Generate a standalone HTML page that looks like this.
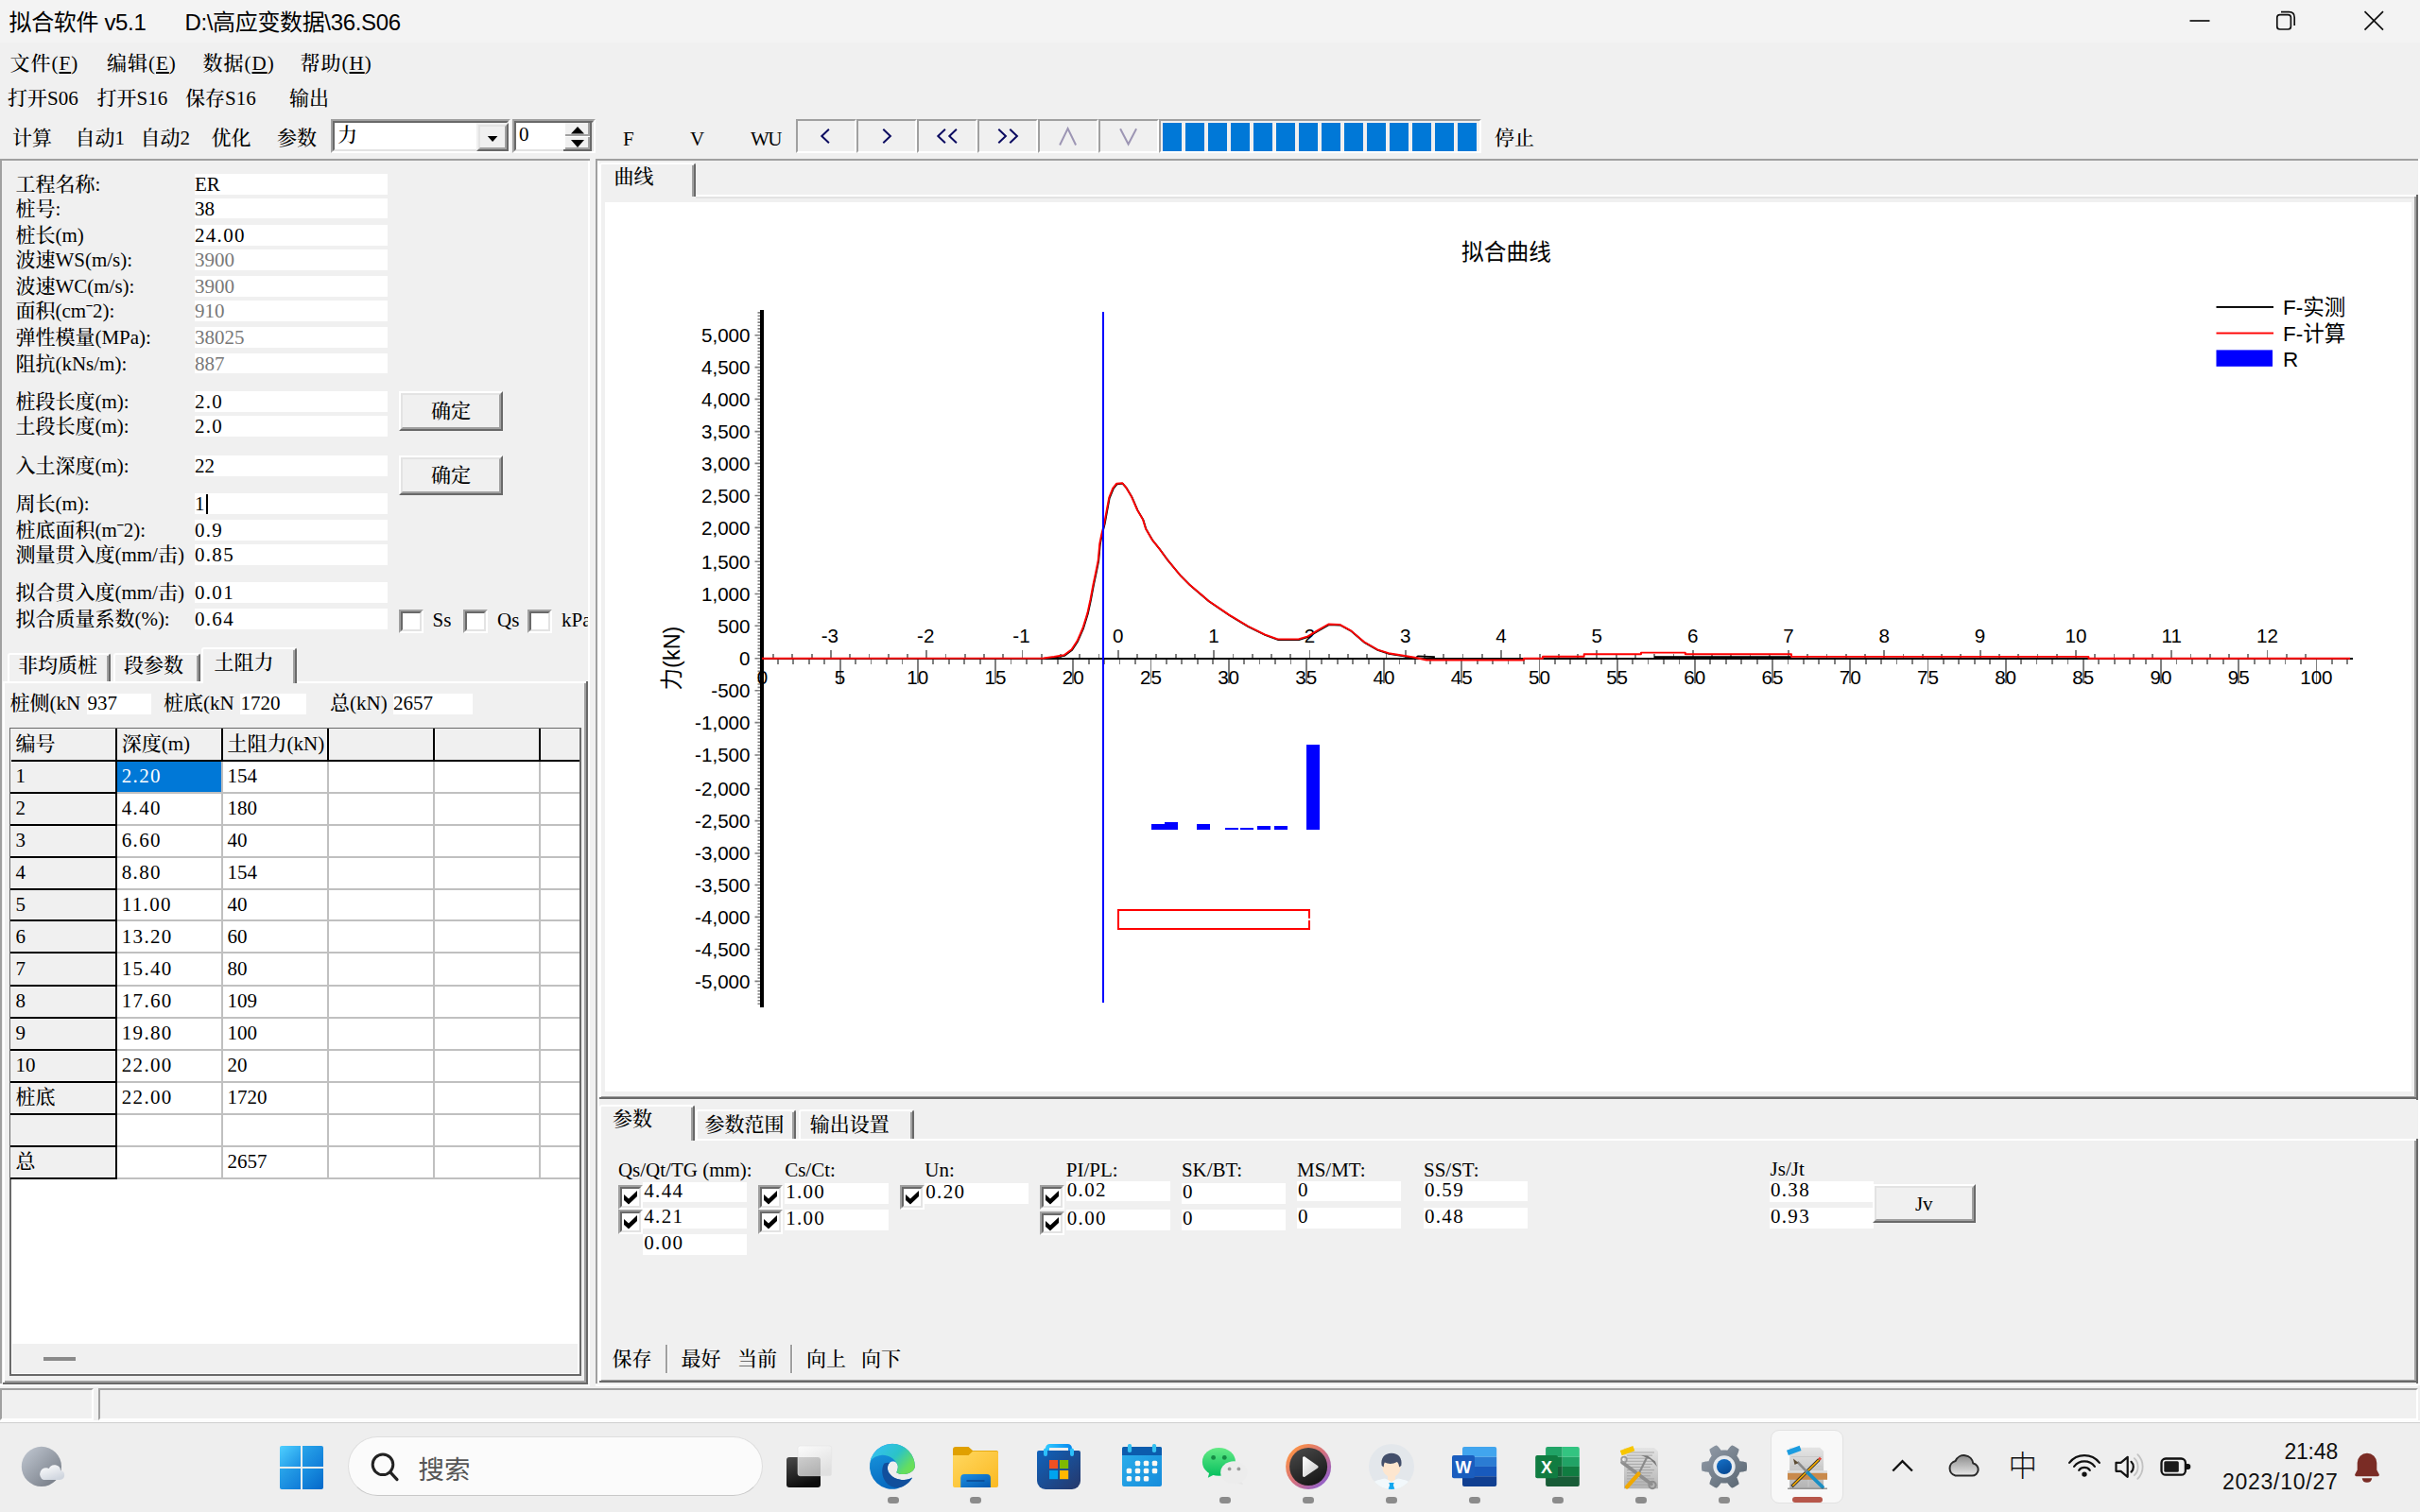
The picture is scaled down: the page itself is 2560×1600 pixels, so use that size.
<!DOCTYPE html><html lang="zh-CN"><head><meta charset="utf-8"><title>拟合软件 v5.1</title><style>
*{box-sizing:border-box;margin:0;padding:0}
html,body{width:2560px;height:1600px;overflow:hidden;background:#f0f0f0}
body{position:relative;font-family:"Liberation Serif","Noto Serif CJK SC",serif;font-size:21px;color:#000;-webkit-font-smoothing:antialiased}
.a{position:absolute}
.t{position:absolute;white-space:nowrap;line-height:22px;height:22px;font-size:21px;font-weight:500;letter-spacing:0}
.ui{font-family:"Liberation Sans","Noto Sans CJK SC",sans-serif;font-weight:400}
.w{position:absolute;background:#fff}
.sunk{position:absolute;border-style:solid;border-width:2px;border-color:#a0a0a0 #fff #fff #a0a0a0}
.sunk>i{position:absolute;left:0;top:0;right:0;bottom:0;border-style:solid;border-width:2px;border-color:#696969 #e3e3e3 #e3e3e3 #696969}
.btn{position:absolute;background:#f0f0f0;border-style:solid;border-width:2px;border-color:#fff #696969 #696969 #fff}
.btn>i{position:absolute;left:0;top:0;right:0;bottom:0;border-style:solid;border-width:2px;border-color:#e3e3e3 #a0a0a0 #a0a0a0 #e3e3e3}
.btn>span{position:absolute;left:0;right:0;text-align:center;white-space:nowrap;line-height:22px;font-weight:500}
.g{color:#787878}
u{text-decoration:underline;text-underline-offset:2px}
</style></head><body>
<div class="a" style="left:0px;top:0px;width:2560px;height:45px;background:#f3f3f3;"></div>
<div class="t ui" style="left:9.5px;top:8.5px;font-size:24px;line-height:30px;height:30px;letter-spacing:-0.35px">拟合软件 v5.1</div>
<div class="t ui" style="left:195.5px;top:8.5px;font-size:24px;line-height:30px;height:30px;letter-spacing:-0.35px">D:\高应变数据\36.S06</div>
<svg class="a" style="left:2300px;top:0" width="260" height="45" viewBox="2300 0 260 45" fill="none" stroke="#111" stroke-width="1.7">
<path d="M2316.5 22H2337.5"/>
<rect x="2408.8" y="15.6" width="14.6" height="15.4" rx="3"/>
<path d="M2413 12.6H2421.5Q2427.2 12.6 2427.2 18.4V27"/>
<path d="M2501.5 12.2L2521 31.6M2521 12.2L2501.5 31.6"/>
</svg>
<div class="t " style="left:10.5px;top:55.5px;letter-spacing:1px">文件(<u>F</u>)</div>
<div class="t " style="left:113px;top:55.5px;letter-spacing:1px">编辑(<u>E</u>)</div>
<div class="t " style="left:214.5px;top:55.5px;letter-spacing:1px">数据(<u>D</u>)</div>
<div class="t " style="left:317.5px;top:55.5px;letter-spacing:1px">帮助(<u>H</u>)</div>
<div class="t " style="left:8px;top:92.5px;">打开S06</div>
<div class="t " style="left:102.5px;top:92.5px;">打开S16</div>
<div class="t " style="left:196px;top:92.5px;">保存S16</div>
<div class="t " style="left:306px;top:92.5px;">输出</div>
<div class="t " style="left:13px;top:135px;">计算</div>
<div class="t " style="left:79.5px;top:135px;">自动1</div>
<div class="t " style="left:148.5px;top:135px;">自动2</div>
<div class="t " style="left:223.5px;top:135px;">优化</div>
<div class="t " style="left:293px;top:135px;">参数</div>
<div class="sunk" style="left:350px;top:126.2px;width:189.5px;height:36px;background:#fff"><i></i></div>
<div class="t " style="left:357px;top:131.5px;">力</div>
<div class="btn" style="left:504.2px;top:130.3px;width:33.4px;height:29.4px;border-width:2px;border-color:#f0f0f0 #696969 #696969 #f0f0f0"><i style="border-width:2px"></i></div>
<svg class="a" style="left:504px;top:130px" width="34" height="30" viewBox="0 0 34 30"><path d="M11.8 14H22.4L17.1 20Z" fill="#000"/></svg>
<div class="sunk" style="left:542.3px;top:126.4px;width:87.7px;height:35.6px;background:#fff"><i></i></div>
<div class="t " style="left:549px;top:130.5px;">0</div>
<div class="a" style="left:598px;top:130px;width:26px;height:13.5px;background:#f0f0f0;border-right:2px solid #a0a0a0;border-bottom:2px solid #a0a0a0"></div>
<div class="a" style="left:598px;top:144.5px;width:26px;height:13.5px;background:#f0f0f0;border-right:2px solid #a0a0a0;border-bottom:2px solid #a0a0a0"></div>
<div class="a" style="left:624px;top:130px;width:2px;height:29.5px;background:#696969"></div><div class="a" style="left:596px;top:157.8px;width:30px;height:1.8px;background:#696969"></div>
<svg class="a" style="left:598px;top:130px" width="26" height="28" viewBox="0 0 26 28"><path d="M6 11.5H20L13 4Z M6 18H20L13 26Z" fill="#000"/></svg>
<div class="t " style="left:659px;top:136px;">F</div>
<div class="t " style="left:730px;top:136px;">V</div>
<div class="t " style="left:794px;top:136px;letter-spacing:-1.5px">WU</div>
<div class="a" style="left:842.1px;top:126.4px;width:64.2px;height:35.6px;border-left:2px solid #a0a0a0;border-top:2px solid #a0a0a0;border-bottom:2.5px solid #fff;border-right:2px solid #fff"></div>
<div class="a" style="left:906.1px;top:126.4px;width:64.2px;height:35.6px;border-left:2px solid #a0a0a0;border-top:2px solid #a0a0a0;border-bottom:2.5px solid #fff;border-right:2px solid #fff"></div>
<div class="a" style="left:970.1px;top:126.4px;width:64.2px;height:35.6px;border-left:2px solid #a0a0a0;border-top:2px solid #a0a0a0;border-bottom:2.5px solid #fff;border-right:2px solid #fff"></div>
<div class="a" style="left:1034.1px;top:126.4px;width:64.2px;height:35.6px;border-left:2px solid #a0a0a0;border-top:2px solid #a0a0a0;border-bottom:2.5px solid #fff;border-right:2px solid #fff"></div>
<div class="a" style="left:1098.1px;top:126.4px;width:64.2px;height:35.6px;border-left:2px solid #a0a0a0;border-top:2px solid #a0a0a0;border-bottom:2.5px solid #fff;border-right:2px solid #fff"></div>
<div class="a" style="left:1162.1px;top:126.4px;width:64.2px;height:35.6px;border-left:2px solid #a0a0a0;border-top:2px solid #a0a0a0;border-bottom:2.5px solid #fff;border-right:2px solid #fff"></div>
<svg class="a" style="left:0;top:120px" width="1240" height="50" viewBox="0 120 1240 50"><path d="M876.9 136.8L869.3 144L876.9 151.2" fill="none" stroke="#0a0a60" stroke-width="2"/></svg>
<svg class="a" style="left:0;top:120px" width="1240" height="50" viewBox="0 120 1240 50"><path d="M934.3 136.8L941.9 144L934.3 151.2" fill="none" stroke="#0a0a60" stroke-width="2"/></svg>
<svg class="a" style="left:0;top:120px" width="1240" height="50" viewBox="0 120 1240 50"><path d="M999.9 136.8L992.3 144L999.9 151.2M1011.9 136.8L1004.3 144L1011.9 151.2" fill="none" stroke="#0a0a60" stroke-width="2"/></svg>
<svg class="a" style="left:0;top:120px" width="1240" height="50" viewBox="0 120 1240 50"><path d="M1056.3 136.8L1063.9 144L1056.3 151.2M1068.3 136.8L1075.9 144L1068.3 151.2" fill="none" stroke="#0a0a60" stroke-width="2"/></svg>
<svg class="a" style="left:0;top:120px" width="1240" height="50" viewBox="0 120 1240 50"><path d="M1121.1 153.5L1129.6 136L1138.1 153.5" fill="none" stroke="#9d96b4" stroke-width="2"/></svg>
<svg class="a" style="left:0;top:120px" width="1240" height="50" viewBox="0 120 1240 50"><path d="M1185.1 136.3L1193.6 152.5L1202.1 136.3" fill="none" stroke="#9d96b4" stroke-width="2"/></svg>
<div class="a" style="left:1225.7px;top:126.4px;width:341.5px;height:35.6px;border-left:2px solid #a0a0a0;border-top:2px solid #a0a0a0;border-bottom:2.5px solid #fff;border-right:2px solid #fff"></div>
<div class="a" style="left:1229.9px;top:129.8px;width:19.8px;height:29.8px;background:#0078d7;"></div>
<div class="a" style="left:1253.9px;top:129.8px;width:19.8px;height:29.8px;background:#0078d7;"></div>
<div class="a" style="left:1278.0px;top:129.8px;width:19.8px;height:29.8px;background:#0078d7;"></div>
<div class="a" style="left:1302.0px;top:129.8px;width:19.8px;height:29.8px;background:#0078d7;"></div>
<div class="a" style="left:1326.0px;top:129.8px;width:19.8px;height:29.8px;background:#0078d7;"></div>
<div class="a" style="left:1350.1px;top:129.8px;width:19.8px;height:29.8px;background:#0078d7;"></div>
<div class="a" style="left:1374.1px;top:129.8px;width:19.8px;height:29.8px;background:#0078d7;"></div>
<div class="a" style="left:1398.1px;top:129.8px;width:19.8px;height:29.8px;background:#0078d7;"></div>
<div class="a" style="left:1422.1px;top:129.8px;width:19.8px;height:29.8px;background:#0078d7;"></div>
<div class="a" style="left:1446.2px;top:129.8px;width:19.8px;height:29.8px;background:#0078d7;"></div>
<div class="a" style="left:1470.2px;top:129.8px;width:19.8px;height:29.8px;background:#0078d7;"></div>
<div class="a" style="left:1494.2px;top:129.8px;width:19.8px;height:29.8px;background:#0078d7;"></div>
<div class="a" style="left:1518.3px;top:129.8px;width:19.8px;height:29.8px;background:#0078d7;"></div>
<div class="a" style="left:1542.3px;top:129.8px;width:19.8px;height:29.8px;background:#0078d7;"></div>
<div class="t " style="left:1581px;top:135px;">停止</div>
<div class="a" style="left:0px;top:168.3px;width:624px;height:1.8px;background:#a0a0a0;"></div>
<div class="a" style="left:0px;top:168.3px;width:2px;height:1296px;background:#a0a0a0;"></div>
<div class="a" style="left:622px;top:170px;width:2.2px;height:1294px;background:#fff;"></div>
<div class="a" style="left:0px;top:1464.5px;width:624px;height:2px;background:#fff;"></div>
<div class="a" style="left:630px;top:168.3px;width:1928px;height:1.8px;background:#a0a0a0;"></div>
<div class="a" style="left:630px;top:168.3px;width:2px;height:1296px;background:#a0a0a0;"></div>
<div class="a" style="left:632px;top:170px;width:1.5px;height:1294px;background:#fff;"></div>
<div class="a" style="left:630px;top:1464.5px;width:1928px;height:2px;background:#fff;"></div>
<div class="a" style="left:2558px;top:168.3px;width:2px;height:1298px;background:#fff;"></div>
<div class="w" style="left:205.7px;top:184px;width:204.5px;height:21.8px"></div>
<div class="t " style="left:16.4px;top:184px;">工程名称:</div>
<div class="t " style="left:206px;top:184px;">ER</div>
<div class="w" style="left:205.7px;top:209.7px;width:204.5px;height:21.8px"></div>
<div class="t " style="left:16.4px;top:209.7px;">桩号:</div>
<div class="t " style="left:206px;top:209.7px;">38</div>
<div class="w" style="left:205.7px;top:238px;width:204.5px;height:21.8px"></div>
<div class="t " style="left:16.4px;top:238px;">桩长(m)</div>
<div class="t " style="left:206px;top:238px;;letter-spacing:1.3px;">24.00</div>
<div class="w" style="left:205.7px;top:264.2px;width:204.5px;height:21.8px"></div>
<div class="t " style="left:16.4px;top:264.2px;">波速WS(m/s):</div>
<div class="t g" style="left:206px;top:264.2px;">3900</div>
<div class="w" style="left:205.7px;top:292px;width:204.5px;height:21.8px"></div>
<div class="t " style="left:16.4px;top:292px;">波速WC(m/s):</div>
<div class="t g" style="left:206px;top:292px;">3900</div>
<div class="w" style="left:205.7px;top:318.2px;width:204.5px;height:21.8px"></div>
<div class="t " style="left:16.4px;top:318.2px;">面积(cmˉ2):</div>
<div class="t g" style="left:206px;top:318.2px;">910</div>
<div class="w" style="left:205.7px;top:346px;width:204.5px;height:21.8px"></div>
<div class="t " style="left:16.4px;top:346px;">弹性模量(MPa):</div>
<div class="t g" style="left:206px;top:346px;">38025</div>
<div class="w" style="left:205.7px;top:373.7px;width:204.5px;height:21.8px"></div>
<div class="t " style="left:16.4px;top:373.7px;">阻抗(kNs/m):</div>
<div class="t g" style="left:206px;top:373.7px;">887</div>
<div class="w" style="left:205.7px;top:413.9px;width:204.5px;height:21.8px"></div>
<div class="t " style="left:16.4px;top:413.9px;">桩段长度(m):</div>
<div class="t " style="left:206px;top:413.9px;;letter-spacing:1.3px;">2.0</div>
<div class="w" style="left:205.7px;top:439.8px;width:204.5px;height:21.8px"></div>
<div class="t " style="left:16.4px;top:439.8px;">土段长度(m):</div>
<div class="t " style="left:206px;top:439.8px;;letter-spacing:1.3px;">2.0</div>
<div class="w" style="left:205.7px;top:482px;width:204.5px;height:21.8px"></div>
<div class="t " style="left:16.4px;top:482px;">入土深度(m):</div>
<div class="t " style="left:206px;top:482px;">22</div>
<div class="w" style="left:205.7px;top:522px;width:204.5px;height:21.8px"></div>
<div class="t " style="left:16.4px;top:522px;">周长(m):</div>
<div class="t " style="left:206px;top:522px;">1</div>
<div class="w" style="left:205.7px;top:550px;width:204.5px;height:21.8px"></div>
<div class="t " style="left:16.4px;top:550px;">桩底面积(mˉ2):</div>
<div class="t " style="left:206px;top:550px;;letter-spacing:1.3px;">0.9</div>
<div class="w" style="left:205.7px;top:576px;width:204.5px;height:21.8px"></div>
<div class="t " style="left:16.4px;top:576px;">测量贯入度(mm/击)</div>
<div class="t " style="left:206px;top:576px;;letter-spacing:1.3px;">0.85</div>
<div class="w" style="left:205.7px;top:616px;width:204.5px;height:21.8px"></div>
<div class="t " style="left:16.4px;top:616px;">拟合贯入度(mm/击)</div>
<div class="t " style="left:206px;top:616px;;letter-spacing:1.3px;">0.01</div>
<div class="w" style="left:205.7px;top:644px;width:204.5px;height:21.8px"></div>
<div class="t " style="left:16.4px;top:644px;">拟合质量系数(%):</div>
<div class="t " style="left:206px;top:644px;;letter-spacing:1.3px;">0.64</div>
<div class="a" style="left:218.3px;top:523px;width:1.3px;height:20.5px;background:#000;"></div>
<div class="btn" style="left:422px;top:414px;width:110px;height:42px"><i></i><span style="top:8px">确定</span></div>
<div class="btn" style="left:422px;top:482px;width:110px;height:42px"><i></i><span style="top:8px">确定</span></div>
<div class="sunk" style="left:422px;top:644.6px;width:25.5px;height:25.5px;background:#fff"><i></i></div>
<div class="sunk" style="left:490px;top:644.6px;width:25.5px;height:25.5px;background:#fff"><i></i></div>
<div class="sunk" style="left:558px;top:644.6px;width:25.5px;height:25.5px;background:#fff"><i></i></div>
<div class="a" style="left:0;top:640px;width:622px;height:34px;overflow:hidden">
<div class="t " style="left:457.5px;top:5px;">Ss</div>
<div class="t " style="left:526px;top:5px;">Qs</div>
<div class="t " style="left:594px;top:5px;">kPa</div>
</div>
<div class="a" style="left:3px;top:721px;width:617px;height:2px;background:#fff;"></div>
<div class="a" style="left:3px;top:721px;width:2px;height:741px;background:#fff;"></div>
<div class="a" style="left:617.5px;top:723px;width:2px;height:740px;background:#a0a0a0;"></div>
<div class="a" style="left:619.5px;top:721px;width:2px;height:743.5px;background:#696969;"></div>
<div class="a" style="left:5px;top:1460.5px;width:614px;height:2px;background:#a0a0a0;"></div>
<div class="a" style="left:3px;top:1462.5px;width:618.5px;height:2px;background:#696969;"></div>
<div class="a" style="left:8px;top:690.5px;width:108.5px;height:30.5px;background:#f0f0f0;border-left:2px solid #fff;border-top:2px solid #fff;border-right:2px solid #696969;border-top-left-radius:3px;border-top-right-radius:3px"><div class="a" style="right:0;top:1px;bottom:0;width:2px;background:#a0a0a0"></div></div>
<div class="t " style="left:19px;top:693.0px;">非均质桩</div>
<div class="a" style="left:120px;top:690.5px;width:92px;height:30.5px;background:#f0f0f0;border-left:2px solid #fff;border-top:2px solid #fff;border-right:2px solid #696969;border-top-left-radius:3px;border-top-right-radius:3px"><div class="a" style="right:0;top:1px;bottom:0;width:2px;background:#a0a0a0"></div></div>
<div class="t " style="left:131px;top:693.0px;">段参数</div>
<div class="a" style="left:213px;top:685.3px;width:100.5px;height:38px;background:#f0f0f0;border-left:2px solid #fff;border-top:2px solid #fff;border-right:2px solid #696969;border-top-left-radius:3px;border-top-right-radius:3px"><div class="a" style="right:0;top:1px;bottom:0;width:2px;background:#a0a0a0"></div></div>
<div class="t " style="left:226.5px;top:690.3px;">土阻力</div>
<div class="w" style="left:92px;top:734.2px;width:67.5px;height:21.8px"></div>
<div class="w" style="left:254px;top:734.2px;width:70px;height:21.8px"></div>
<div class="w" style="left:415.7px;top:734.2px;width:84.5px;height:21.8px"></div>
<div class="t " style="left:10.6px;top:733.2px;">桩侧(kN</div>
<div class="t " style="left:92.5px;top:733.2px;">937</div>
<div class="t " style="left:173px;top:733.2px;">桩底(kN</div>
<div class="t " style="left:254.5px;top:733.2px;">1720</div>
<div class="t " style="left:349px;top:733.2px;">总(kN)</div>
<div class="t " style="left:416px;top:733.2px;">2657</div>
<div class="a" style="left:10.2px;top:770px;width:605px;height:686px;background:#fff;border:2px solid #696969"></div>
<div class="a" style="left:11px;top:771px;width:602px;height:33.5px;background:#f0f0f0;"></div>
<div class="a" style="left:11px;top:771px;width:112px;height:476px;background:#f0f0f0;"></div>
<div class="a" style="left:13px;top:1422px;width:598px;height:31px;background:#f0f0f0;"></div>
<div class="a" style="left:45.7px;top:1435.5px;width:34.3px;height:4.5px;background:#8a8a8a;"></div>
<div class="a" style="left:233.8px;top:804px;width:2px;height:443.5px;background:#c0c0c0;"></div>
<div class="a" style="left:346px;top:804px;width:2px;height:443.5px;background:#c0c0c0;"></div>
<div class="a" style="left:458px;top:804px;width:2px;height:443.5px;background:#c0c0c0;"></div>
<div class="a" style="left:570.2px;top:804px;width:2px;height:443.5px;background:#c0c0c0;"></div>
<div class="a" style="left:123px;top:837.7px;width:490px;height:2px;background:#c0c0c0;"></div>
<div class="a" style="left:123px;top:871.5px;width:490px;height:2px;background:#c0c0c0;"></div>
<div class="a" style="left:123px;top:905.6px;width:490px;height:2px;background:#c0c0c0;"></div>
<div class="a" style="left:123px;top:939.5px;width:490px;height:2px;background:#c0c0c0;"></div>
<div class="a" style="left:123px;top:973.3px;width:490px;height:2px;background:#c0c0c0;"></div>
<div class="a" style="left:123px;top:1007.3px;width:490px;height:2px;background:#c0c0c0;"></div>
<div class="a" style="left:123px;top:1041.7px;width:490px;height:2px;background:#c0c0c0;"></div>
<div class="a" style="left:123px;top:1075.5px;width:490px;height:2px;background:#c0c0c0;"></div>
<div class="a" style="left:123px;top:1109.6px;width:490px;height:2px;background:#c0c0c0;"></div>
<div class="a" style="left:123px;top:1143.5px;width:490px;height:2px;background:#c0c0c0;"></div>
<div class="a" style="left:123px;top:1177.6px;width:490px;height:2px;background:#c0c0c0;"></div>
<div class="a" style="left:123px;top:1211.7px;width:490px;height:2px;background:#c0c0c0;"></div>
<div class="a" style="left:123px;top:1245.6px;width:490px;height:2px;background:#c0c0c0;"></div>
<div class="a" style="left:124px;top:805.3px;width:110px;height:32.5px;background:#0078d7;"></div>
<div class="a" style="left:122px;top:770.7px;width:2px;height:34.5px;background:#000;"></div>
<div class="a" style="left:233.8px;top:770.7px;width:2px;height:34.5px;background:#000;"></div>
<div class="a" style="left:346px;top:770.7px;width:2px;height:34.5px;background:#000;"></div>
<div class="a" style="left:458px;top:770.7px;width:2px;height:34.5px;background:#000;"></div>
<div class="a" style="left:570.2px;top:770.7px;width:2px;height:34.5px;background:#000;"></div>
<div class="a" style="left:12px;top:804px;width:601px;height:2px;background:#000;"></div>
<div class="a" style="left:122px;top:770.7px;width:2px;height:477px;background:#000;"></div>
<div class="a" style="left:11px;top:837.7px;width:113px;height:2px;background:#000;"></div>
<div class="a" style="left:11px;top:871.5px;width:113px;height:2px;background:#000;"></div>
<div class="a" style="left:11px;top:905.6px;width:113px;height:2px;background:#000;"></div>
<div class="a" style="left:11px;top:939.5px;width:113px;height:2px;background:#000;"></div>
<div class="a" style="left:11px;top:973.3px;width:113px;height:2px;background:#000;"></div>
<div class="a" style="left:11px;top:1007.3px;width:113px;height:2px;background:#000;"></div>
<div class="a" style="left:11px;top:1041.7px;width:113px;height:2px;background:#000;"></div>
<div class="a" style="left:11px;top:1075.5px;width:113px;height:2px;background:#000;"></div>
<div class="a" style="left:11px;top:1109.6px;width:113px;height:2px;background:#000;"></div>
<div class="a" style="left:11px;top:1143.5px;width:113px;height:2px;background:#000;"></div>
<div class="a" style="left:11px;top:1177.6px;width:113px;height:2px;background:#000;"></div>
<div class="a" style="left:11px;top:1211.7px;width:113px;height:2px;background:#000;"></div>
<div class="a" style="left:11px;top:1245.6px;width:113px;height:2px;background:#000;"></div>
<div class="t " style="left:16.4px;top:775.5px;">编号</div>
<div class="t " style="left:128.8px;top:775.5px;">深度(m)</div>
<div class="a" style="left:236px;top:772px;width:110px;height:31px;overflow:hidden">
<div class="t" style="left:4.5px;top:3.5px">土阻力(kN)</div></div>
<div class="t " style="left:16.4px;top:809.5px;">1</div>
<div class="t " style="left:128.8px;top:809.5px;color:#fff;letter-spacing:1.3px;">2.20</div>
<div class="t " style="left:240.5px;top:809.5px;">154</div>
<div class="t " style="left:16.4px;top:843.9000000000001px;">2</div>
<div class="t " style="left:128.8px;top:843.9000000000001px;;letter-spacing:1.3px;">4.40</div>
<div class="t " style="left:240.5px;top:843.9000000000001px;">180</div>
<div class="t " style="left:16.4px;top:877.7px;">3</div>
<div class="t " style="left:128.8px;top:877.7px;;letter-spacing:1.3px;">6.60</div>
<div class="t " style="left:240.5px;top:877.7px;">40</div>
<div class="t " style="left:16.4px;top:911.8000000000001px;">4</div>
<div class="t " style="left:128.8px;top:911.8000000000001px;;letter-spacing:1.3px;">8.80</div>
<div class="t " style="left:240.5px;top:911.8000000000001px;">154</div>
<div class="t " style="left:16.4px;top:945.7px;">5</div>
<div class="t " style="left:128.8px;top:945.7px;;letter-spacing:1.3px;">11.00</div>
<div class="t " style="left:240.5px;top:945.7px;">40</div>
<div class="t " style="left:16.4px;top:979.5px;">6</div>
<div class="t " style="left:128.8px;top:979.5px;;letter-spacing:1.3px;">13.20</div>
<div class="t " style="left:240.5px;top:979.5px;">60</div>
<div class="t " style="left:16.4px;top:1013.5px;">7</div>
<div class="t " style="left:128.8px;top:1013.5px;;letter-spacing:1.3px;">15.40</div>
<div class="t " style="left:240.5px;top:1013.5px;">80</div>
<div class="t " style="left:16.4px;top:1047.9px;">8</div>
<div class="t " style="left:128.8px;top:1047.9px;;letter-spacing:1.3px;">17.60</div>
<div class="t " style="left:240.5px;top:1047.9px;">109</div>
<div class="t " style="left:16.4px;top:1081.7px;">9</div>
<div class="t " style="left:128.8px;top:1081.7px;;letter-spacing:1.3px;">19.80</div>
<div class="t " style="left:240.5px;top:1081.7px;">100</div>
<div class="t " style="left:16.4px;top:1115.8px;">10</div>
<div class="t " style="left:128.8px;top:1115.8px;;letter-spacing:1.3px;">22.00</div>
<div class="t " style="left:240.5px;top:1115.8px;">20</div>
<div class="t " style="left:16.4px;top:1149.7px;">桩底</div>
<div class="t " style="left:128.8px;top:1149.7px;;letter-spacing:1.3px;">22.00</div>
<div class="t " style="left:240.5px;top:1149.7px;">1720</div>
<div class="t " style="left:16.4px;top:1217.9px;">总</div>
<div class="t " style="left:240.5px;top:1217.9px;">2657</div>
<div class="a" style="left:0px;top:1469px;width:98.5px;height:34px;border-style:solid;border-width:2px;border-color:#a0a0a0 #fff #fff #a0a0a0"></div>
<div class="a" style="left:104px;top:1469px;width:2454px;height:34px;border-style:solid;border-width:2px;border-color:#a0a0a0 #fff #fff #a0a0a0"></div>
<div class="a" style="left:0px;top:1503px;width:2560px;height:2.5px;background:#fcfcfc;"></div>
<div class="a" style="left:634px;top:171.5px;width:101.5px;height:36.7px;background:#f0f0f0;border-left:2px solid #fff;border-top:2px solid #fff;border-right:2px solid #696969;border-top-left-radius:3px;border-top-right-radius:3px"><div class="a" style="right:0;top:1px;bottom:0;width:2px;background:#a0a0a0"></div></div>
<div class="t " style="left:649.5px;top:175.5px;">曲线</div>
<div class="a" style="left:735.5px;top:206px;width:1820px;height:2.2px;background:#fff;"></div>
<div class="a" style="left:735.5px;top:208.2px;width:1818px;height:1.6px;background:#e3e3e3;"></div>
<div class="a" style="left:634px;top:208px;width:2px;height:954px;background:#fff;"></div>
<div class="a" style="left:2553.8px;top:208px;width:2px;height:954px;background:#a0a0a0;"></div>
<div class="a" style="left:2555.8px;top:206px;width:2px;height:957.5px;background:#696969;"></div>
<div class="a" style="left:636px;top:1159.5px;width:1918px;height:2px;background:#a0a0a0;"></div>
<div class="a" style="left:634px;top:1161.3px;width:1923.5px;height:2px;background:#696969;"></div>
<div class="a" style="left:640px;top:213.8px;width:1910.5px;height:941px;background:#fff;"></div>
<svg class="a" style="left:640px;top:214px" width="1910" height="940" viewBox="640 214 1910 940" font-family="'Liberation Sans','Noto Sans CJK SC',sans-serif" font-size="20.6px" fill="#000"><path d="M798.5 1038.4H805M798.5 1004.5H805M798.5 970.4H805M798.5 936.5H805M798.5 903H805M798.5 868.6H805M798.5 834.7H805M798.5 799H805M798.5 764.6H805M798.5 730.8H805M798.5 696.8H805M798.5 662.3H805M798.5 628.5H805M798.5 594.3H805M798.5 558.4H805M798.5 524.5H805M798.5 490.4H805M798.5 456.6H805M798.5 422.4H805M798.5 388.6H805M798.5 354.7H805M801.5 1035.0H805M801.5 1031.6H805M801.5 1028.2H805M801.5 1024.8H805M801.5 1021.5H805M801.5 1018.1H805M801.5 1014.7H805M801.5 1011.3H805M801.5 1007.9H805M801.5 1001.1H805M801.5 997.7H805M801.5 994.3H805M801.5 990.9H805M801.5 987.5H805M801.5 984.0H805M801.5 980.6H805M801.5 977.2H805M801.5 973.8H805M801.5 967.0H805M801.5 963.6H805M801.5 960.2H805M801.5 956.8H805M801.5 953.5H805M801.5 950.1H805M801.5 946.7H805M801.5 943.3H805M801.5 939.9H805M801.5 933.1H805M801.5 929.8H805M801.5 926.5H805M801.5 923.1H805M801.5 919.8H805M801.5 916.4H805M801.5 913.0H805M801.5 909.7H805M801.5 906.4H805M801.5 899.6H805M801.5 896.1H805M801.5 892.7H805M801.5 889.2H805M801.5 885.8H805M801.5 882.4H805M801.5 878.9H805M801.5 875.5H805M801.5 872.0H805M801.5 865.2H805M801.5 861.8H805M801.5 858.4H805M801.5 855.0H805M801.5 851.7H805M801.5 848.3H805M801.5 844.9H805M801.5 841.5H805M801.5 838.1H805M801.5 831.1H805M801.5 827.6H805M801.5 824.0H805M801.5 820.4H805M801.5 816.9H805M801.5 813.3H805M801.5 809.7H805M801.5 806.1H805M801.5 802.6H805M801.5 795.6H805M801.5 792.1H805M801.5 788.7H805M801.5 785.2H805M801.5 781.8H805M801.5 778.4H805M801.5 774.9H805M801.5 771.5H805M801.5 768.0H805M801.5 761.2H805M801.5 757.8H805M801.5 754.5H805M801.5 751.1H805M801.5 747.7H805M801.5 744.3H805M801.5 740.9H805M801.5 737.6H805M801.5 734.2H805M801.5 727.4H805M801.5 724.0H805M801.5 720.6H805M801.5 717.2H805M801.5 713.8H805M801.5 710.4H805M801.5 707.0H805M801.5 703.6H805M801.5 700.2H805M801.5 693.3H805M801.5 689.9H805M801.5 686.4H805M801.5 683.0H805M801.5 679.5H805M801.5 676.1H805M801.5 672.6H805M801.5 669.2H805M801.5 665.8H805M801.5 658.9H805M801.5 655.5H805M801.5 652.2H805M801.5 648.8H805M801.5 645.4H805M801.5 642.0H805M801.5 638.6H805M801.5 635.3H805M801.5 631.9H805M801.5 625.1H805M801.5 621.7H805M801.5 618.2H805M801.5 614.8H805M801.5 611.4H805M801.5 608.0H805M801.5 604.6H805M801.5 601.1H805M801.5 597.7H805M801.5 590.7H805M801.5 587.1H805M801.5 583.5H805M801.5 579.9H805M801.5 576.3H805M801.5 572.8H805M801.5 569.2H805M801.5 565.6H805M801.5 562.0H805M801.5 555.0H805M801.5 551.6H805M801.5 548.2H805M801.5 544.8H805M801.5 541.5H805M801.5 538.1H805M801.5 534.7H805M801.5 531.3H805M801.5 527.9H805M801.5 521.1H805M801.5 517.7H805M801.5 514.3H805M801.5 510.9H805M801.5 507.4H805M801.5 504.0H805M801.5 500.6H805M801.5 497.2H805M801.5 493.8H805M801.5 487.0H805M801.5 483.6H805M801.5 480.3H805M801.5 476.9H805M801.5 473.5H805M801.5 470.1H805M801.5 466.7H805M801.5 463.4H805M801.5 460.0H805M801.5 453.2H805M801.5 449.8H805M801.5 446.3H805M801.5 442.9H805M801.5 439.5H805M801.5 436.1H805M801.5 432.7H805M801.5 429.2H805M801.5 425.8H805M801.5 419.0H805M801.5 415.6H805M801.5 412.3H805M801.5 408.9H805M801.5 405.5H805M801.5 402.1H805M801.5 398.7H805M801.5 395.4H805M801.5 392.0H805M801.5 385.2H805M801.5 381.8H805M801.5 378.4H805M801.5 375.0H805M801.5 371.6H805M801.5 368.3H805M801.5 364.9H805M801.5 361.5H805M801.5 358.1H805M801.5 351.3H805M801.5 1041.8H805M801.5 347.9H805M801.5 1045.2H805M801.5 344.5H805M801.5 1048.6H805M801.5 341.1H805M801.5 1052.0H805M801.5 337.7H805M801.5 1055.4H805M801.5 334.3H805M801.5 1058.8H805M801.5 330.9H805M801.5 1062.2H805" stroke="#808080" stroke-width="1.6" fill="none"/><path d="M806.4 697V723M822.8 697V702.5M839.3 697V702.5M855.7 697V702.5M872.2 697V702.5M888.6 697V723M905.0 697V702.5M921.5 697V702.5M937.9 697V702.5M954.4 697V702.5M970.8 697V723M987.2 697V702.5M1003.7 697V702.5M1020.1 697V702.5M1036.6 697V702.5M1053.0 697V723M1069.4 697V702.5M1085.9 697V702.5M1102.3 697V702.5M1118.8 697V702.5M1135.2 697V723M1151.6 697V702.5M1168.1 697V702.5M1184.5 697V702.5M1201.0 697V702.5M1217.4 697V723M1233.8 697V702.5M1250.3 697V702.5M1266.7 697V702.5M1283.2 697V702.5M1299.6 697V723M1316.0 697V702.5M1332.5 697V702.5M1348.9 697V702.5M1365.4 697V702.5M1381.8 697V723M1398.2 697V702.5M1414.7 697V702.5M1431.1 697V702.5M1447.6 697V702.5M1464.0 697V723M1480.4 697V702.5M1496.9 697V702.5M1513.3 697V702.5M1529.8 697V702.5M1546.2 697V723M1562.6 697V702.5M1579.1 697V702.5M1595.5 697V702.5M1612.0 697V702.5M1628.4 697V723M1644.8 697V702.5M1661.3 697V702.5M1677.7 697V702.5M1694.2 697V702.5M1710.6 697V723M1727.0 697V702.5M1743.5 697V702.5M1759.9 697V702.5M1776.4 697V702.5M1792.8 697V723M1809.2 697V702.5M1825.7 697V702.5M1842.1 697V702.5M1858.6 697V702.5M1875.0 697V723M1891.4 697V702.5M1907.9 697V702.5M1924.3 697V702.5M1940.8 697V702.5M1957.2 697V723M1973.6 697V702.5M1990.1 697V702.5M2006.5 697V702.5M2023.0 697V702.5M2039.4 697V723M2055.8 697V702.5M2072.3 697V702.5M2088.7 697V702.5M2105.2 697V702.5M2121.6 697V723M2138.0 697V702.5M2154.5 697V702.5M2170.9 697V702.5M2187.4 697V702.5M2203.8 697V723M2220.2 697V702.5M2236.7 697V702.5M2253.1 697V702.5M2269.6 697V702.5M2286.0 697V723M2302.4 697V702.5M2318.9 697V702.5M2335.3 697V702.5M2351.8 697V702.5M2368.2 697V723M2384.6 697V702.5M2401.1 697V702.5M2417.5 697V702.5M2434.0 697V702.5M2450.4 697V723M2466.8 697V702.5M2483.3 697V702.5M818.1 697V692M838.3 697V692M858.6 697V692M878.9 697V687.5M899.1 697V692M919.4 697V692M939.7 697V692M959.9 697V692M980.2 697V687.5M1000.4 697V692M1020.7 697V692M1041.0 697V692M1061.2 697V692M1081.5 697V687.5M1101.8 697V692M1122.0 697V692M1142.3 697V692M1162.5 697V692M1182.8 697V687.5M1203.1 697V692M1223.3 697V692M1243.6 697V692M1263.8 697V692M1284.1 697V687.5M1304.4 697V692M1324.6 697V692M1344.9 697V692M1365.2 697V692M1385.4 697V687.5M1405.7 697V692M1425.9 697V692M1446.2 697V692M1466.5 697V692M1486.7 697V687.5M1507.0 697V692M1527.3 697V692M1547.5 697V692M1567.8 697V692M1588.0 697V687.5M1608.3 697V692M1628.6 697V692M1648.8 697V692M1669.1 697V692M1689.3 697V687.5M1709.6 697V692M1729.9 697V692M1750.1 697V692M1770.4 697V692M1790.7 697V687.5M1810.9 697V692M1831.2 697V692M1851.4 697V692M1871.7 697V692M1892.0 697V687.5M1912.2 697V692M1932.5 697V692M1952.8 697V692M1973.0 697V692M1993.3 697V687.5M2013.5 697V692M2033.8 697V692M2054.1 697V692M2074.3 697V692M2094.6 697V687.5M2114.9 697V692M2135.1 697V692M2155.4 697V692M2175.6 697V692M2195.9 697V687.5M2216.2 697V692M2236.4 697V692M2256.7 697V692M2276.9 697V692M2297.2 697V687.5M2317.5 697V692M2337.7 697V692M2358.0 697V692M2378.3 697V692M2398.5 697V687.5M2418.8 697V692M2439.0 697V692" stroke="#808080" stroke-width="1.8" fill="none" shape-rendering="crispEdges"/><text x="793.5" y="1045.6" text-anchor="end">-5,000</text><text x="793.5" y="1011.7" text-anchor="end">-4,500</text><text x="793.5" y="977.6" text-anchor="end">-4,000</text><text x="793.5" y="943.7" text-anchor="end">-3,500</text><text x="793.5" y="910.2" text-anchor="end">-3,000</text><text x="793.5" y="875.8" text-anchor="end">-2,500</text><text x="793.5" y="841.9" text-anchor="end">-2,000</text><text x="793.5" y="806.2" text-anchor="end">-1,500</text><text x="793.5" y="771.8" text-anchor="end">-1,000</text><text x="793.5" y="738.0" text-anchor="end">-500</text><text x="793.5" y="704.0" text-anchor="end">0</text><text x="793.5" y="669.5" text-anchor="end">500</text><text x="793.5" y="635.7" text-anchor="end">1,000</text><text x="793.5" y="601.5" text-anchor="end">1,500</text><text x="793.5" y="565.6" text-anchor="end">2,000</text><text x="793.5" y="531.7" text-anchor="end">2,500</text><text x="793.5" y="497.6" text-anchor="end">3,000</text><text x="793.5" y="463.8" text-anchor="end">3,500</text><text x="793.5" y="429.6" text-anchor="end">4,000</text><text x="793.5" y="395.8" text-anchor="end">4,500</text><text x="793.5" y="361.9" text-anchor="end">5,000</text><text x="806.4" y="723.6" text-anchor="middle">0</text><text x="888.6" y="723.6" text-anchor="middle">5</text><text x="970.8" y="723.6" text-anchor="middle">10</text><text x="1053.0" y="723.6" text-anchor="middle">15</text><text x="1135.2" y="723.6" text-anchor="middle">20</text><text x="1217.4" y="723.6" text-anchor="middle">25</text><text x="1299.6" y="723.6" text-anchor="middle">30</text><text x="1381.8" y="723.6" text-anchor="middle">35</text><text x="1464.0" y="723.6" text-anchor="middle">40</text><text x="1546.2" y="723.6" text-anchor="middle">45</text><text x="1628.4" y="723.6" text-anchor="middle">50</text><text x="1710.6" y="723.6" text-anchor="middle">55</text><text x="1792.8" y="723.6" text-anchor="middle">60</text><text x="1875.0" y="723.6" text-anchor="middle">65</text><text x="1957.2" y="723.6" text-anchor="middle">70</text><text x="2039.4" y="723.6" text-anchor="middle">75</text><text x="2121.6" y="723.6" text-anchor="middle">80</text><text x="2203.8" y="723.6" text-anchor="middle">85</text><text x="2286.0" y="723.6" text-anchor="middle">90</text><text x="2368.2" y="723.6" text-anchor="middle">95</text><text x="2450.4" y="723.6" text-anchor="middle">100</text><text x="877.9" y="679.6" text-anchor="middle">-3</text><text x="979.2" y="679.6" text-anchor="middle">-2</text><text x="1080.5" y="679.6" text-anchor="middle">-1</text><text x="1182.8" y="679.6" text-anchor="middle">0</text><text x="1284.1" y="679.6" text-anchor="middle">1</text><text x="1385.4" y="679.6" text-anchor="middle">2</text><text x="1486.7" y="679.6" text-anchor="middle">3</text><text x="1588.0" y="679.6" text-anchor="middle">4</text><text x="1689.3" y="679.6" text-anchor="middle">5</text><text x="1790.7" y="679.6" text-anchor="middle">6</text><text x="1892.0" y="679.6" text-anchor="middle">7</text><text x="1993.3" y="679.6" text-anchor="middle">8</text><text x="2094.6" y="679.6" text-anchor="middle">9</text><text x="2195.9" y="679.6" text-anchor="middle">10</text><text x="2297.2" y="679.6" text-anchor="middle">11</text><text x="2398.5" y="679.6" text-anchor="middle">12</text><text transform="translate(719,696.5) rotate(-90)" text-anchor="middle" font-size="23.5px">力(kN)</text><text x="1593.5" y="275" text-anchor="middle" font-size="23.7px">拟合曲线</text><rect x="2344.5" y="324" width="60.5" height="1.9" fill="#000"/><rect x="2344.5" y="351.6" width="60.5" height="1.9" fill="#f00"/><rect x="2344.5" y="370.4" width="59.5" height="17.4" fill="#00f"/><text x="2415" y="333" font-size="22.5px">F-实测</text><text x="2415" y="360.7" font-size="22.5px">F-计算</text><text x="2415" y="387.5" font-size="22.5px">R</text><path d="M806 328V1065.6" stroke="#000" stroke-width="3.6" shape-rendering="crispEdges"/><path d="M806 696.8H2488.7" stroke="#000" stroke-width="2.6" shape-rendering="crispEdges"/><path d="M1104.3 697.1L1115.5 695.6L1126.1 693.8L1134.1 687.9L1140.0 678.9L1146.0 665.1L1150.9 649.2L1153.9 635.3L1156.9 619.4L1159.8 605.6L1162.2 593.6L1163.8 575.8L1165.8 565.9L1168.8 554.0L1171.3 540.1L1173.7 527.2L1177.7 517.3L1181.7 512.3L1187.6 511.7L1191.6 516.3L1197.5 526.2L1203.5 540.1L1209.4 550.0L1212.4 559.9L1219.3 571.8L1227.3 581.8L1235.2 592.6L1249.1 609.5L1259.0 619.4L1278.8 636.3L1300.7 651.2L1320.5 663.1L1338.3 672.0L1352.2 677.0L1374.1 677.0L1384.0 674.0L1393.9 668.0L1405.8 661.1L1417.7 661.5L1429.6 668.0L1443.5 679.9L1457.4 687.9L1469.3 691.8L1485.1 694.4L1497.0 696.4L1500.0 694.3L1517.0 695.0L1517.0 697.0" stroke="#000" stroke-width="1.8" fill="none"/><rect x="1750" y="694.2" width="145" height="2" fill="#000"/><path d="M806.0 696.8L1103.8 696.5L1115.0 695.0L1125.6 693.2L1133.6 687.3L1139.5 678.3L1145.5 664.5L1150.4 648.6L1153.4 634.7L1156.4 618.8L1159.3 605.0L1161.7 593.0L1163.3 575.2L1165.3 565.3L1168.3 553.4L1170.8 539.5L1173.2 526.6L1177.2 516.7L1181.2 511.7L1187.1 511.1L1191.1 515.7L1197.0 525.6L1203.0 539.5L1208.9 549.4L1211.9 559.3L1218.8 571.2L1226.8 581.2L1234.7 592.0L1248.6 608.9L1258.5 618.8L1278.3 635.7L1300.2 650.6L1320.0 662.5L1337.8 671.4L1351.7 676.4L1373.6 676.4L1383.5 673.4L1393.4 667.4L1405.3 660.5L1417.2 660.9L1429.1 667.4L1443.0 679.3L1456.9 687.3L1468.8 691.2L1484.6 693.8L1496.5 695.8L1509.0 698.5L1612.0 698.5L1612.0 696.7L1632.0 696.7L1632.0 694.8L1675.7 694.8L1675.7 692.2L1736.0 692.2L1736.0 690.6L1782.8 690.6L1782.8 692.2L1895.0 692.2L1895.0 694.9L2209.4 694.9L2209.4 696.8L2486.0 696.8" stroke="#f00" stroke-width="1.9" fill="none" stroke-linejoin="round"/><path d="M1167 330V1061" stroke="#00f" stroke-width="2" shape-rendering="crispEdges"/><rect x="1217.8" y="872" width="14.2" height="5.9" fill="#00f" shape-rendering="crispEdges"/><rect x="1232" y="869.8" width="14.0" height="8.1" fill="#00f" shape-rendering="crispEdges"/><rect x="1266" y="872" width="14.0" height="5.9" fill="#00f" shape-rendering="crispEdges"/><rect x="1296" y="875.9" width="14.0" height="2.0" fill="#00f" shape-rendering="crispEdges"/><rect x="1312" y="875.9" width="14.0" height="2.0" fill="#00f" shape-rendering="crispEdges"/><rect x="1330" y="874" width="14.0" height="3.9" fill="#00f" shape-rendering="crispEdges"/><rect x="1348" y="874" width="14.0" height="3.9" fill="#00f" shape-rendering="crispEdges"/><rect x="1381.9" y="787.9" width="14.0" height="90.0" fill="#00f" shape-rendering="crispEdges"/><rect x="1182.9" y="962.9" width="202.1" height="20" fill="none" stroke="#f00" stroke-width="1.8" shape-rendering="crispEdges"/><rect x="1384" y="971.8" width="2.2" height="2.2" fill="#fff"/></svg>
<div class="a" style="left:733px;top:1204.5px;width:1823px;height:2px;background:#fff;"></div>
<div class="a" style="left:634px;top:1206px;width:2px;height:256px;background:#fff;"></div>
<div class="a" style="left:2553.8px;top:1206.5px;width:2px;height:255px;background:#a0a0a0;"></div>
<div class="a" style="left:2555.8px;top:1204.5px;width:2px;height:259px;background:#696969;"></div>
<div class="a" style="left:636px;top:1459.5px;width:1918px;height:2px;background:#a0a0a0;"></div>
<div class="a" style="left:634px;top:1461.3px;width:1923.5px;height:2px;background:#696969;"></div>
<div class="a" style="left:736.4px;top:1173.5px;width:105.5px;height:31px;background:#f0f0f0;border-left:2px solid #fff;border-top:2px solid #fff;border-right:2px solid #696969;border-top-left-radius:3px;border-top-right-radius:3px"><div class="a" style="right:0;top:1px;bottom:0;width:2px;background:#a0a0a0"></div></div>
<div class="t " style="left:745.4px;top:1178.5px;">参数范围</div>
<div class="a" style="left:844.8px;top:1173.5px;width:122px;height:31px;background:#f0f0f0;border-left:2px solid #fff;border-top:2px solid #fff;border-right:2px solid #696969;border-top-left-radius:3px;border-top-right-radius:3px"><div class="a" style="right:0;top:1px;bottom:0;width:2px;background:#a0a0a0"></div></div>
<div class="t " style="left:856.8px;top:1178.5px;">输出设置</div>
<div class="a" style="left:634px;top:1168.5px;width:100.5px;height:38px;background:#f0f0f0;border-left:2px solid #fff;border-top:2px solid #fff;border-right:2px solid #696969;border-top-left-radius:3px;border-top-right-radius:3px"><div class="a" style="right:0;top:1px;bottom:0;width:2px;background:#a0a0a0"></div></div>
<div class="t " style="left:648px;top:1173.0px;">参数</div>
<div class="t " style="left:653.9px;top:1227px;">Qs/Qt/TG (mm):</div>
<div class="t " style="left:830.2px;top:1227px;">Cs/Ct:</div>
<div class="t " style="left:978.3px;top:1227px;">Un:</div>
<div class="t " style="left:1127.8px;top:1227px;">PI/PL:</div>
<div class="t " style="left:1249.9px;top:1227px;">SK/BT:</div>
<div class="t " style="left:1372px;top:1227px;">MS/MT:</div>
<div class="t " style="left:1506px;top:1227px;">SS/ST:</div>
<div class="t " style="left:1872.6px;top:1226px;">Js/Jt</div>
<div class="w" style="left:680.3px;top:1250.5px;width:109.5px;height:21.6px"></div>
<div class="t " style="left:681.3px;top:1248.5px;;letter-spacing:1.3px;">4.44</div>
<div class="w" style="left:680.3px;top:1278px;width:109.5px;height:21.6px"></div>
<div class="t " style="left:681.3px;top:1276px;;letter-spacing:1.3px;">4.21</div>
<div class="w" style="left:680.3px;top:1306px;width:109.5px;height:21.6px"></div>
<div class="t " style="left:681.3px;top:1304px;;letter-spacing:1.3px;">0.00</div>
<div class="w" style="left:830.2px;top:1252.4px;width:110px;height:21.6px"></div>
<div class="t " style="left:831.2px;top:1250.4px;;letter-spacing:1.3px;">1.00</div>
<div class="w" style="left:830.2px;top:1280px;width:110px;height:21.6px"></div>
<div class="t " style="left:831.2px;top:1278px;;letter-spacing:1.3px;">1.00</div>
<div class="w" style="left:978.3px;top:1252.4px;width:110px;height:21.6px"></div>
<div class="t " style="left:979.3px;top:1250.4px;;letter-spacing:1.3px;">0.20</div>
<div class="w" style="left:1127.8px;top:1249.8px;width:110.3px;height:21.6px"></div>
<div class="t " style="left:1128.8px;top:1247.8px;;letter-spacing:1.3px;">0.02</div>
<div class="w" style="left:1127.8px;top:1280.2px;width:110.3px;height:21.6px"></div>
<div class="t " style="left:1128.8px;top:1278.2px;;letter-spacing:1.3px;">0.00</div>
<div class="w" style="left:1249.9px;top:1252.4px;width:110.3px;height:21.6px"></div>
<div class="t " style="left:1250.9px;top:1250.4px;">0</div>
<div class="w" style="left:1249.9px;top:1280.2px;width:110.3px;height:21.6px"></div>
<div class="t " style="left:1250.9px;top:1278.2px;">0</div>
<div class="w" style="left:1372px;top:1249.8px;width:110px;height:21.6px"></div>
<div class="t " style="left:1373px;top:1247.8px;">0</div>
<div class="w" style="left:1372px;top:1278px;width:110px;height:21.6px"></div>
<div class="t " style="left:1373px;top:1276px;">0</div>
<div class="w" style="left:1506px;top:1249.8px;width:110px;height:21.6px"></div>
<div class="t " style="left:1507px;top:1247.8px;;letter-spacing:1.3px;">0.59</div>
<div class="w" style="left:1506px;top:1278px;width:110px;height:21.6px"></div>
<div class="t " style="left:1507px;top:1276px;;letter-spacing:1.3px;">0.48</div>
<div class="w" style="left:1872px;top:1250px;width:109.5px;height:22px"></div>
<div class="t " style="left:1873px;top:1248px;;letter-spacing:1.3px;">0.38</div>
<div class="w" style="left:1872px;top:1277.6px;width:109.5px;height:22px"></div>
<div class="t " style="left:1873px;top:1275.6px;;letter-spacing:1.3px;">0.93</div>
<div class="sunk" style="left:653.9px;top:1253.9px;width:26px;height:26px;background:#fff"><i></i><svg style="position:absolute;left:0;top:0" width="22" height="22" viewBox="0 0 22 22"><path d="M4 8L9 12.6L18 4V10L9 18.6L4 14Z" fill="#000"/></svg></div>
<div class="sunk" style="left:653.9px;top:1280px;width:26px;height:26px;background:#fff"><i></i><svg style="position:absolute;left:0;top:0" width="22" height="22" viewBox="0 0 22 22"><path d="M4 8L9 12.6L18 4V10L9 18.6L4 14Z" fill="#000"/></svg></div>
<div class="sunk" style="left:802px;top:1253.9px;width:26px;height:26px;background:#fff"><i></i><svg style="position:absolute;left:0;top:0" width="22" height="22" viewBox="0 0 22 22"><path d="M4 8L9 12.6L18 4V10L9 18.6L4 14Z" fill="#000"/></svg></div>
<div class="sunk" style="left:802px;top:1280px;width:26px;height:26px;background:#fff"><i></i><svg style="position:absolute;left:0;top:0" width="22" height="22" viewBox="0 0 22 22"><path d="M4 8L9 12.6L18 4V10L9 18.6L4 14Z" fill="#000"/></svg></div>
<div class="sunk" style="left:951.9px;top:1253.9px;width:26px;height:26px;background:#fff"><i></i><svg style="position:absolute;left:0;top:0" width="22" height="22" viewBox="0 0 22 22"><path d="M4 8L9 12.6L18 4V10L9 18.6L4 14Z" fill="#000"/></svg></div>
<div class="sunk" style="left:1100px;top:1253.9px;width:26px;height:26px;background:#fff"><i></i><svg style="position:absolute;left:0;top:0" width="22" height="22" viewBox="0 0 22 22"><path d="M4 8L9 12.6L18 4V10L9 18.6L4 14Z" fill="#000"/></svg></div>
<div class="sunk" style="left:1100px;top:1281.5px;width:25.5px;height:25.5px;background:#fff"><i></i><svg style="position:absolute;left:0;top:0" width="22" height="22" viewBox="0 0 22 22"><path d="M4 8L9 12.6L18 4V10L9 18.6L4 14Z" fill="#000"/></svg></div>
<div class="btn" style="left:1980.5px;top:1252.5px;width:109.5px;height:41px"><i></i><span style="top:8px">Jv</span></div>
<div class="t " style="left:647.5px;top:1427px;">保存</div>
<div class="t " style="left:720.5px;top:1427px;">最好</div>
<div class="t " style="left:780px;top:1427px;">当前</div>
<div class="t " style="left:853px;top:1427px;">向上</div>
<div class="t " style="left:911px;top:1427px;">向下</div>
<div class="a" style="left:704px;top:1422.5px;width:1.6px;height:30px;background:#a0a0a0;"></div>
<div class="a" style="left:705.6px;top:1422.5px;width:1.6px;height:30px;background:#fff;"></div>
<div class="a" style="left:836.3px;top:1422.5px;width:1.6px;height:30px;background:#a0a0a0;"></div>
<div class="a" style="left:837.9px;top:1422.5px;width:1.6px;height:30px;background:#fff;"></div>
<div class="a" style="left:0;top:1505px;width:2560px;height:95px;background:#eeeeee;border-top:1.6px solid #cfcfcf"></div>
<div class="a" style="left:368px;top:1520px;width:439px;height:63px;border-radius:32px;background:#fbfbfb;border:1.5px solid #dedede;border-bottom-color:#c8c8c8"></div>
<div class="t ui" style="left:442.5px;top:1537.5px;font-size:27.5px;line-height:36px;height:36px;color:#555">搜索</div>
<div class="a" style="left:1873.4px;top:1513.4px;width:77px;height:77.7px;border-radius:9px;background:#f8f8f8;border:1.3px solid #e2e2e2"></div>
<div class="a" style="left:1896px;top:1584px;width:32px;height:6px;border-radius:3px;background:#b7564a"></div>
<div class="a" style="left:938.5px;top:1584px;width:12.4px;height:6.6px;border-radius:3.3px;background:#8b8b8b"></div>
<div class="a" style="left:1025.8px;top:1584px;width:12.4px;height:6.6px;border-radius:3.3px;background:#8b8b8b"></div>
<div class="a" style="left:1289.8px;top:1584px;width:12.4px;height:6.6px;border-radius:3.3px;background:#8b8b8b"></div>
<div class="a" style="left:1377.8px;top:1584px;width:12.4px;height:6.6px;border-radius:3.3px;background:#8b8b8b"></div>
<div class="a" style="left:1466.1px;top:1584px;width:12.4px;height:6.6px;border-radius:3.3px;background:#8b8b8b"></div>
<div class="a" style="left:1553.8px;top:1584px;width:12.4px;height:6.6px;border-radius:3.3px;background:#8b8b8b"></div>
<div class="a" style="left:1641.8px;top:1584px;width:12.4px;height:6.6px;border-radius:3.3px;background:#8b8b8b"></div>
<div class="a" style="left:1729.8px;top:1584px;width:12.4px;height:6.6px;border-radius:3.3px;background:#8b8b8b"></div>
<div class="a" style="left:1817.8px;top:1584px;width:12.4px;height:6.6px;border-radius:3.3px;background:#8b8b8b"></div>
<div class="t ui" style="left:2373px;top:1522px;width:100px;text-align:right;font-size:23px;line-height:28px;height:28px;letter-spacing:-0.2px;color:#111">21:48</div>
<div class="t ui" style="left:2333px;top:1554px;width:140.5px;text-align:right;font-size:23px;line-height:28px;height:28px;letter-spacing:0.75px;color:#111">2023/10/27</div>
<div class="t ui" style="left:2124.5px;top:1529px;font-size:30.5px;font-weight:300;line-height:44px;height:44px;color:#111">中</div>
<svg class="a" style="left:0;top:1505px" width="2560" height="95" viewBox="0 1505 2560 95"><defs>
<linearGradient id="gw" x1="0" y1="0" x2="1" y2="1"><stop offset="0" stop-color="#c3cad4"/><stop offset="1" stop-color="#6f757f"/></linearGradient>
<linearGradient id="gc" x1="0" y1="0" x2="0.6" y2="1"><stop offset="0" stop-color="#ffffff"/><stop offset="1" stop-color="#cfd5de"/></linearGradient>
<linearGradient id="w1" x1="0" y1="0" x2="1" y2="1"><stop offset="0" stop-color="#4fd0ff"/><stop offset="1" stop-color="#1a8fe3"/></linearGradient>
<linearGradient id="w2" x1="0" y1="0" x2="1" y2="1"><stop offset="0" stop-color="#2aa6ea"/><stop offset="1" stop-color="#0f7bd8"/></linearGradient>
<linearGradient id="w3" x1="0" y1="0" x2="1" y2="1"><stop offset="0" stop-color="#1c95e4"/><stop offset="1" stop-color="#0668c9"/></linearGradient>
<linearGradient id="tv1" x1="0" y1="0" x2="0.4" y2="1"><stop offset="0" stop-color="#4a4a4a"/><stop offset="1" stop-color="#0c0c0c"/></linearGradient>
<linearGradient id="tv2" x1="0" y1="0" x2="0.5" y2="1"><stop offset="0" stop-color="#ffffff"/><stop offset="1" stop-color="#dcdcdc"/></linearGradient>
<linearGradient id="e1" x1="0" y1="0.2" x2="1" y2="0.8"><stop offset="0" stop-color="#35bff3"/><stop offset="0.5" stop-color="#2bc3c8"/><stop offset="0.85" stop-color="#63dd62"/><stop offset="1" stop-color="#6fe050"/></linearGradient>
<linearGradient id="e2" x1="0" y1="0" x2="0.3" y2="1"><stop offset="0" stop-color="#1b9de2"/><stop offset="1" stop-color="#0669bf"/></linearGradient>
<linearGradient id="fo" x1="0" y1="0" x2="1" y2="1"><stop offset="0" stop-color="#ffd860"/><stop offset="1" stop-color="#fbb922"/></linearGradient>
<linearGradient id="fb" x1="0" y1="0" x2="1" y2="1"><stop offset="0" stop-color="#1b8fe3"/><stop offset="1" stop-color="#0558ae"/></linearGradient>
<linearGradient id="st" x1="0" y1="0" x2="1" y2="1"><stop offset="0" stop-color="#0f63bd"/><stop offset="1" stop-color="#26376a"/></linearGradient>
<linearGradient id="sh" x1="0" y1="0" x2="1" y2="0"><stop offset="0" stop-color="#2cc6ff"/><stop offset="1" stop-color="#0a8cf0"/></linearGradient>
<linearGradient id="ca" x1="0" y1="0" x2="1" y2="1"><stop offset="0" stop-color="#2db0ec"/><stop offset="1" stop-color="#168cdb"/></linearGradient>
<linearGradient id="wc" x1="0" y1="0" x2="0" y2="1"><stop offset="0" stop-color="#63ea85"/><stop offset="1" stop-color="#08c05f"/></linearGradient>
<linearGradient id="pr" x1="0" y1="0" x2="1" y2="1"><stop offset="0.1" stop-color="#ff9540"/><stop offset="0.5" stop-color="#d4707e"/><stop offset="0.9" stop-color="#8c5fd0"/></linearGradient>
<linearGradient id="pi" x1="0" y1="0" x2="0.5" y2="1"><stop offset="0" stop-color="#4c4c4c"/><stop offset="1" stop-color="#1a1a1a"/></linearGradient>
<linearGradient id="pt" x1="0" y1="0" x2="1" y2="1"><stop offset="0" stop-color="#ffffff"/><stop offset="1" stop-color="#c8c8c8"/></linearGradient>
<linearGradient id="ge" x1="0" y1="0" x2="1" y2="1"><stop offset="0" stop-color="#959eaa"/><stop offset="1" stop-color="#56636f"/></linearGradient>
<linearGradient id="gb" x1="0" y1="0" x2="0.5" y2="1"><stop offset="0" stop-color="#1672c9"/><stop offset="1" stop-color="#084c98"/></linearGradient>
<linearGradient id="dc" x1="0" y1="0" x2="0" y2="1"><stop offset="0" stop-color="#e4e4e4"/><stop offset="1" stop-color="#b4b4b4"/></linearGradient>
<linearGradient id="cl" x1="0" y1="0" x2="0" y2="1"><stop offset="0" stop-color="#8c8c8c"/><stop offset="1" stop-color="#e8e8e8"/></linearGradient>
<clipPath id="avc"><circle cx="1472" cy="1552" r="24"/></clipPath>
</defs><circle cx="43.9" cy="1551.9" r="21.1" fill="url(#gw)"/><path d="M46 1566h17.5a5 5 0 0 0 0.6-9.9a6.5 6.5 0 0 0-12.3-2.2a6.2 6.2 0 0 0-5.8 12.1z" fill="url(#gc)"/><path d="M298 1530h20v22h-22v-20a2 2 0 0 1 2-2z" fill="url(#w1)"/><path d="M320 1530h20a2 2 0 0 1 2 2v20h-22z" fill="url(#w2)"/><path d="M296 1554h22v22h-20a2 2 0 0 1-2-2z" fill="url(#w2)"/><path d="M320 1554h22v20a2 2 0 0 1-2 2h-20z" fill="url(#w3)"/><circle cx="405" cy="1549.8" r="10.8" fill="none" stroke="#222" stroke-width="3"/><path d="M412.8 1557.8L420 1565.6" stroke="#222" stroke-width="3.2" stroke-linecap="round"/><rect x="832" y="1542" width="36" height="32" rx="3" fill="url(#tv1)"/><rect x="844" y="1530" width="35.7" height="31.7" rx="2.5" fill="url(#tv2)" fill-opacity="0.78" stroke="#e4e4e4" stroke-width="0.6"/><g transform="translate(810,1510) scale(0.11157)"><path d="M1200 160A215 215 0 1 0 1338 540C1362 522 1380 502 1390 480C1370 492 1345 502 1310 503C1250 503 1200 480 1172 440C1150 405 1150 365 1175 340C1195 322 1225 322 1243 345C1262 372 1252 405 1240 432C1260 447 1300 452 1330 447C1385 437 1415 400 1415 375A215 215 0 0 0 1200 160Z" fill="url(#e2)"/><path d="M1122 348C1095 395 1098 470 1140 525C1185 580 1270 600 1338 540C1362 522 1380 502 1390 480C1370 492 1345 502 1310 503C1250 503 1200 480 1172 440C1150 405 1150 365 1175 340C1160 336 1138 338 1122 348Z" fill="#114f9c"/><path d="M990 330A215 215 0 0 1 1415 375C1415 400 1385 437 1330 447C1300 452 1260 447 1240 432C1252 405 1262 372 1243 345C1215 300 1160 262 1095 268C1040 274 1005 300 990 330Z" fill="url(#e1)"/></g><path d="M1008 1534a3 3 0 0 1 3-3h13.500l4.500 4h25a2 2 0 0 1 2 2v6h-48z" fill="#e0a000"/><path d="M1008 1540h16.500l4.500-4.200h25a2 2 0 0 1 2 2v34.200a2 2 0 0 1-2 2h-44a2 2 0 0 1-2-2z" fill="url(#fo)"/><path d="M1016.200 1574v-10a4 4 0 0 1 4-4h23.700a4 4 0 0 1 4 4v10z" fill="url(#fb)"/><path d="M1022.500 1567h19" stroke="#0a4a94" stroke-width="1.6"/><path d="M1108 1539v-6.500a2.500 2.500 0 0 1 2.500-2.500h19a2.500 2.500 0 0 1 2.500 2.500v6.500" fill="none" stroke="url(#sh)" stroke-width="4"/><path d="M1097 1537a2 2 0 0 1 2-2h42a2 2 0 0 1 2 2v30a9 9 0 0 1-9 9h-28a9 9 0 0 1-9-9z" fill="url(#st)"/><path d="M1106 1539v-4.500M1134 1539v-4.500" stroke="#2cc0fa" stroke-width="4" stroke-linecap="round"/><rect x="1110" y="1545" width="9.100" height="9.100" fill="#f25022"/><rect x="1121" y="1545" width="9.200" height="9.100" fill="#7fba00"/><rect x="1110" y="1556" width="9.100" height="9.200" fill="#00a4ef"/><rect x="1121" y="1556" width="9.200" height="9.200" fill="#ffb900"/><rect x="1187" y="1531" width="42" height="42" rx="2" fill="url(#ca)"/><path d="M1187 1540v-7a2 2 0 0 1 2-2h38a2 2 0 0 1 2 2v7z" fill="#0c5cad"/><rect x="1192.900" y="1528" width="4.200" height="9" rx="1.800" fill="#35c1f1"/><rect x="1218.900" y="1528" width="4.200" height="9" rx="1.800" fill="#35c1f1"/><rect x="1200.8" y="1545.8" width="5.400" height="5.400" rx="1.500" fill="#fdf8f3"/><rect x="1209.8" y="1545.8" width="5.400" height="5.400" rx="1.500" fill="#fdf8f3"/><rect x="1218.8" y="1545.8" width="5.400" height="5.400" rx="1.500" fill="#fdf8f3"/><rect x="1191.7" y="1553.8" width="5.400" height="5.400" rx="1.500" fill="#fdf8f3"/><rect x="1200.8" y="1553.8" width="5.400" height="5.400" rx="1.500" fill="#fdf8f3"/><rect x="1209.8" y="1553.8" width="5.400" height="5.400" rx="1.500" fill="#fdf8f3"/><rect x="1218.8" y="1553.8" width="5.400" height="5.400" rx="1.500" fill="#fdf8f3"/><rect x="1191.7" y="1562.0" width="5.400" height="5.400" rx="1.500" fill="#fdf8f3"/><rect x="1200.8" y="1562.0" width="5.400" height="5.400" rx="1.500" fill="#fdf8f3"/><rect x="1209.8" y="1562.0" width="5.400" height="5.400" rx="1.500" fill="#fdf8f3"/><path d="M1279.500 1557.500l-1.700 6.300l7.500-3.800z" fill="#10c565"/><ellipse cx="1289.400" cy="1546.900" rx="17.500" ry="14.900" fill="url(#wc)"/><circle cx="1283.600" cy="1542.400" r="2.400" fill="#168c45"/><circle cx="1295.300" cy="1542.400" r="2.400" fill="#168c45"/><path d="M1312 1566.500l3.500 4.800l-8-2z" fill="#e6e6e6"/><ellipse cx="1305.400" cy="1558.200" rx="14.200" ry="12" fill="#ececec"/><circle cx="1300.600" cy="1554.400" r="1.900" fill="#9a9a9a"/><circle cx="1310.400" cy="1554.400" r="1.900" fill="#9a9a9a"/><circle cx="1384.100" cy="1552" r="24" fill="url(#pr)"/><circle cx="1384.100" cy="1552" r="20" fill="url(#pi)"/><path d="M1378 1542.800a1.500 1.500 0 0 1 2.300-1.300l13.600 9.400a1.500 1.500 0 0 1 0 2.500l-13.600 9.300a1.500 1.500 0 0 1-2.300-1.300z" fill="url(#pt)"/><circle cx="1472" cy="1552" r="24" fill="#e3e7eb"/><g clip-path="url(#avc)"><path d="M1447 1577c2-9 10-11 18-12.500l7 3l7-3c8 1.500 16 3.500 18 12.500z" fill="#f2f8fb"/><path d="M1468 1556h8v9.500l-4 3l-4-3z" fill="#fde6cf"/><ellipse cx="1472" cy="1552.500" rx="9.600" ry="10.500" fill="#fde6cf"/><path d="M1461.700 1551c-1.500-8 3-13.200 10.300-13.200s11.800 5.200 10.300 13.200l-2.200 1.500c-0.300-3-1-4.500-2.300-5.500c-4 2.500-9.500 2.500-13 0.500c-0.800 1.500-1 3-1 5z" fill="#434f6b"/><path d="M1469.300 1569h5.400l-0.800 2.500l1.500 4.500h-6.800l1.500-4.500z" fill="#12a7ef"/></g><path d="M1547 1533a2 2 0 0 1 2-2h32.200a2 2 0 0 1 2 2v8.800h-36.200z" fill="#41a5ee"/><rect x="1547" y="1541.800" width="36.200" height="10.100" fill="#2b7cd3"/><rect x="1547" y="1551.800" width="36.200" height="10.500" fill="#185abd"/><path d="M1547 1562.200h36.200v8.800a2 2 0 0 1-2 2h-32.200a2 2 0 0 1-2-2z" fill="#103f91"/><rect x="1536" y="1540" width="24" height="24.200" rx="2" fill="#1a5dbe"/><text x="1548" y="1558.500" text-anchor="middle" font-family="'Liberation Sans',sans-serif" font-weight="bold" font-size="18px" fill="#fff">W</text><path d="M1635.100 1533a2 2 0 0 1 2-2h15.600v10.800h-17.600z" fill="#21a366"/><path d="M1652.700 1531h16.100a2 2 0 0 1 2 2v8.800h-18.100z" fill="#33c481"/><rect x="1635.100" y="1541.800" width="17.600" height="10.100" fill="#107c41"/><rect x="1652.700" y="1541.800" width="18.100" height="10.100" fill="#21a366"/><rect x="1635.100" y="1551.800" width="17.600" height="10.500" fill="#185c37"/><rect x="1652.700" y="1551.800" width="18.100" height="10.500" fill="#107c41"/><path d="M1635.100 1562.200h35.700v8.800a2 2 0 0 1-2 2h-31.700a2 2 0 0 1-2-2z" fill="#185c37"/><rect x="1624.200" y="1540" width="23.800" height="24.200" rx="2" fill="#107c41"/><text x="1636.100" y="1558.500" text-anchor="middle" font-family="'Liberation Sans',sans-serif" font-weight="bold" font-size="18px" fill="#fff">X</text><path d="M1718 1532h32l4 4v39.300h-36z" fill="url(#dc)"/><path d="M1721 1537.0h29M1721 1540.1h27M1721 1543.2h25M1721 1546.3h29M1721 1549.4h27M1721 1552.5h25M1721 1555.6h29M1721 1558.7h27M1721 1561.8h25M1721 1564.9h29M1721 1568.0h27M1721 1571.1h25" stroke="#a2a2a2" stroke-width="0.9"/><rect x="1714.300" y="1532.300" width="14.500" height="5.600" fill="#f7c600" transform="rotate(-20 1721.600 1535.100)"/><path d="M1716 1547.500L1747 1570.500" stroke="#8e8e8e" stroke-width="3.600" stroke-linecap="round"/><circle cx="1748" cy="1571.500" r="3.600" fill="none" stroke="#8e8e8e" stroke-width="2.200"/><circle cx="1718" cy="1544.500" r="2.800" fill="none" stroke="#9a9a9a" stroke-width="1.800"/><path d="M1733.800 1559L1742 1542.500" stroke="#8a8a8a" stroke-width="2.200"/><path d="M1736 1540l10 4.500l7 7.500l-2-5.500l-8-6z" fill="#7a7a7a"/><path d="M1721 1573.500L1733.500 1559.500" stroke="#f0a800" stroke-width="4.200" stroke-linecap="round"/><path d="M1824.0 1534.5L1824.5 1534.5L1824.9 1534.5L1825.4 1534.6L1825.8 1534.6L1826.3 1534.6L1826.7 1534.7L1827.2 1534.8L1827.9 1533.9L1828.6 1532.9L1829.4 1532.0L1830.2 1531.0L1831.1 1530.2L1832.0 1529.4L1832.6 1529.6L1833.2 1529.8L1833.8 1530.1L1834.3 1530.3L1834.9 1530.6L1835.5 1530.9L1836.0 1531.2L1836.5 1531.5L1837.1 1531.9L1837.6 1532.2L1838.1 1532.6L1838.6 1533.0L1839.1 1533.3L1839.6 1533.8L1839.4 1534.9L1839.1 1536.1L1838.7 1537.3L1838.2 1538.5L1837.8 1539.6L1837.3 1540.6L1837.6 1541.0L1837.9 1541.3L1838.2 1541.7L1838.4 1542.1L1838.7 1542.5L1838.9 1542.9L1839.2 1543.2L1839.4 1543.6L1839.6 1544.1L1839.8 1544.5L1840.0 1544.9L1840.2 1545.3L1840.3 1545.7L1840.5 1546.2L1841.6 1546.3L1842.8 1546.4L1844.0 1546.6L1845.3 1546.9L1846.5 1547.2L1847.6 1547.6L1847.7 1548.2L1847.8 1548.9L1847.9 1549.5L1847.9 1550.1L1848.0 1550.7L1848.0 1551.4L1848.0 1552.0L1848.0 1552.6L1848.0 1553.3L1847.9 1553.9L1847.9 1554.5L1847.8 1555.1L1847.7 1555.8L1847.6 1556.4L1846.5 1556.8L1845.3 1557.1L1844.0 1557.4L1842.8 1557.6L1841.6 1557.7L1840.5 1557.8L1840.3 1558.3L1840.2 1558.7L1840.0 1559.1L1839.8 1559.5L1839.6 1559.9L1839.4 1560.4L1839.2 1560.8L1838.9 1561.1L1838.7 1561.5L1838.4 1561.9L1838.2 1562.3L1837.9 1562.7L1837.6 1563.0L1837.3 1563.4L1837.8 1564.4L1838.2 1565.5L1838.7 1566.7L1839.1 1567.9L1839.4 1569.1L1839.6 1570.2L1839.1 1570.7L1838.6 1571.0L1838.1 1571.4L1837.6 1571.8L1837.1 1572.1L1836.5 1572.5L1836.0 1572.8L1835.5 1573.1L1834.9 1573.4L1834.3 1573.7L1833.8 1573.9L1833.2 1574.2L1832.6 1574.4L1832.0 1574.6L1831.1 1573.8L1830.2 1573.0L1829.4 1572.0L1828.6 1571.1L1827.9 1570.1L1827.2 1569.2L1826.7 1569.3L1826.3 1569.4L1825.8 1569.4L1825.4 1569.4L1824.9 1569.5L1824.5 1569.5L1824.0 1569.5L1823.5 1569.5L1823.1 1569.5L1822.6 1569.4L1822.2 1569.4L1821.7 1569.4L1821.3 1569.3L1820.8 1569.2L1820.1 1570.1L1819.4 1571.1L1818.6 1572.0L1817.8 1573.0L1816.9 1573.8L1816.0 1574.6L1815.4 1574.4L1814.8 1574.2L1814.2 1573.9L1813.7 1573.7L1813.1 1573.4L1812.5 1573.1L1812.0 1572.8L1811.5 1572.5L1810.9 1572.1L1810.4 1571.8L1809.9 1571.4L1809.4 1571.0L1808.9 1570.7L1808.4 1570.2L1808.6 1569.1L1808.9 1567.9L1809.3 1566.7L1809.8 1565.5L1810.2 1564.4L1810.7 1563.4L1810.4 1563.0L1810.1 1562.7L1809.8 1562.3L1809.6 1561.9L1809.3 1561.5L1809.1 1561.1L1808.8 1560.8L1808.6 1560.4L1808.4 1559.9L1808.2 1559.5L1808.0 1559.1L1807.8 1558.7L1807.7 1558.3L1807.5 1557.8L1806.4 1557.7L1805.2 1557.6L1804.0 1557.4L1802.7 1557.1L1801.5 1556.8L1800.4 1556.4L1800.3 1555.8L1800.2 1555.1L1800.1 1554.5L1800.1 1553.9L1800.0 1553.3L1800.0 1552.6L1800.0 1552.0L1800.0 1551.4L1800.0 1550.7L1800.1 1550.1L1800.1 1549.5L1800.2 1548.9L1800.3 1548.2L1800.4 1547.6L1801.5 1547.2L1802.7 1546.9L1804.0 1546.6L1805.2 1546.4L1806.4 1546.3L1807.5 1546.2L1807.7 1545.7L1807.8 1545.3L1808.0 1544.9L1808.2 1544.5L1808.4 1544.1L1808.6 1543.6L1808.8 1543.2L1809.1 1542.9L1809.3 1542.5L1809.6 1542.1L1809.8 1541.7L1810.1 1541.3L1810.4 1541.0L1810.7 1540.6L1810.2 1539.6L1809.8 1538.5L1809.3 1537.3L1808.9 1536.1L1808.6 1534.9L1808.4 1533.8L1808.9 1533.3L1809.4 1533.0L1809.9 1532.6L1810.4 1532.2L1810.9 1531.9L1811.5 1531.5L1812.0 1531.2L1812.5 1530.9L1813.1 1530.6L1813.7 1530.3L1814.2 1530.1L1814.8 1529.8L1815.4 1529.6L1816.0 1529.4L1816.9 1530.2L1817.8 1531.0L1818.6 1532.0L1819.4 1532.9L1820.1 1533.9L1820.8 1534.8L1821.3 1534.7L1821.7 1534.6L1822.2 1534.6L1822.6 1534.6L1823.1 1534.5L1823.5 1534.5Z" fill="url(#ge)"/><circle cx="1824" cy="1552" r="11.700" fill="#e6eaee"/><circle cx="1824" cy="1552" r="8" fill="url(#gb)"/><path d="M1893.100 1531.800h32l4 4v38.900h-36z" fill="url(#dc)"/><path d="M1895 1541.500h32M1895 1551.500h32M1913 1551.500v22" stroke="#c9c9c9" stroke-width="1"/><rect x="1890.500" y="1532.100" width="14.500" height="5.600" fill="#1b9ce0" transform="rotate(-20 1897.700 1534.900)"/><rect x="1891" y="1556.100" width="42" height="2.700" fill="#dcdcdc"/><rect x="1891" y="1558.800" width="42" height="7" fill="#c98a4c"/><path d="M1895.500 1573L1924.300 1544.500" stroke="#2a2a2a" stroke-width="3.200"/><path d="M1896.200 1572.300L1924 1544.800" stroke="#f2a900" stroke-width="1.700"/><path d="M1924.300 1544.500l1.700-1.700" stroke="#e64034" stroke-width="3"/><path d="M1928.100 1573.600L1911.300 1557.400" stroke="#1b8fc4" stroke-width="3.600" stroke-linecap="round"/><path d="M1911.300 1557.400L1901.300 1546.800" stroke="#8a8a8a" stroke-width="2.600"/><path d="M1902.500 1548l-5.500-4.500l1.500 6.500z" fill="#5b4a32"/><path d="M1891 1575.300h42" stroke="#555" stroke-width="1.400" stroke-opacity="0.6"/><path d="M2002.300 1556.500L2012.500 1546.100L2022.900 1556.500" fill="none" stroke="#111" stroke-width="2.300"/><path d="M2068.500 1561.500h17.500a6.500 6.500 0 0 0 1.300-12.900a9.800 9.800 0 0 0-18.700-2.600a8 8 0 0 0-0.100 15.500z" fill="url(#cl)" stroke="#2a2a2a" stroke-width="2" stroke-linejoin="round"/><path d="M2199.2 1555.8A7.3 7.3 0 0 1 2210.8 1555.8" fill="none" stroke="#111" stroke-width="2.200" stroke-linecap="round"/><path d="M2194.1 1551.8A13.8 13.8 0 0 1 2215.9 1551.8" fill="none" stroke="#111" stroke-width="2.200" stroke-linecap="round"/><path d="M2189.1 1547.9A20.2 20.2 0 0 1 2220.9 1547.9" fill="none" stroke="#111" stroke-width="2.200" stroke-linecap="round"/><circle cx="2205" cy="1560.100" r="2.700" fill="#111"/><path d="M2238.500 1547.800h5l7.200-6v21l-7.200-6h-5z" fill="none" stroke="#111" stroke-width="2.200" stroke-linejoin="round"/><path d="M2254.500 1546.800a7.500 7.500 0 0 1 0 10.800" fill="none" stroke="#111" stroke-width="2.200" stroke-linecap="round"/><path d="M2257.800 1543.200a12.500 12.500 0 0 1 0 18" fill="none" stroke="#c2c2c2" stroke-width="1.800" stroke-linecap="round"/><path d="M2261.300 1539.200a18 18 0 0 1 0 25.600" fill="none" stroke="#c2c2c2" stroke-width="1.800" stroke-linecap="round"/><rect x="2286.500" y="1543.500" width="25.400" height="17.200" rx="4.500" fill="none" stroke="#111" stroke-width="2.300"/><rect x="2289.300" y="1546.300" width="15.500" height="11.500" rx="1.500" fill="#1a1a1a"/><path d="M2313 1549h1.700a2.600 2.600 0 0 1 2.600 2.600v0.700a2.600 2.600 0 0 1-2.600 2.600h-1.700z" fill="#111"/><path d="M2504 1537.800a10.300 10.300 0 0 1 10.300 10.300v7.400l2.400 4.500a1.500 1.500 0 0 1-1.300 2.200h-22.800a1.500 1.500 0 0 1-1.300-2.200l2.400-4.500v-7.400a10.300 10.300 0 0 1 10.300-10.300z" fill="#7a2c25"/><path d="M2498.700 1564.200h10.500a5.300 5.300 0 0 1-10.500 0z" fill="#7a2c25"/></svg>
</body></html>
